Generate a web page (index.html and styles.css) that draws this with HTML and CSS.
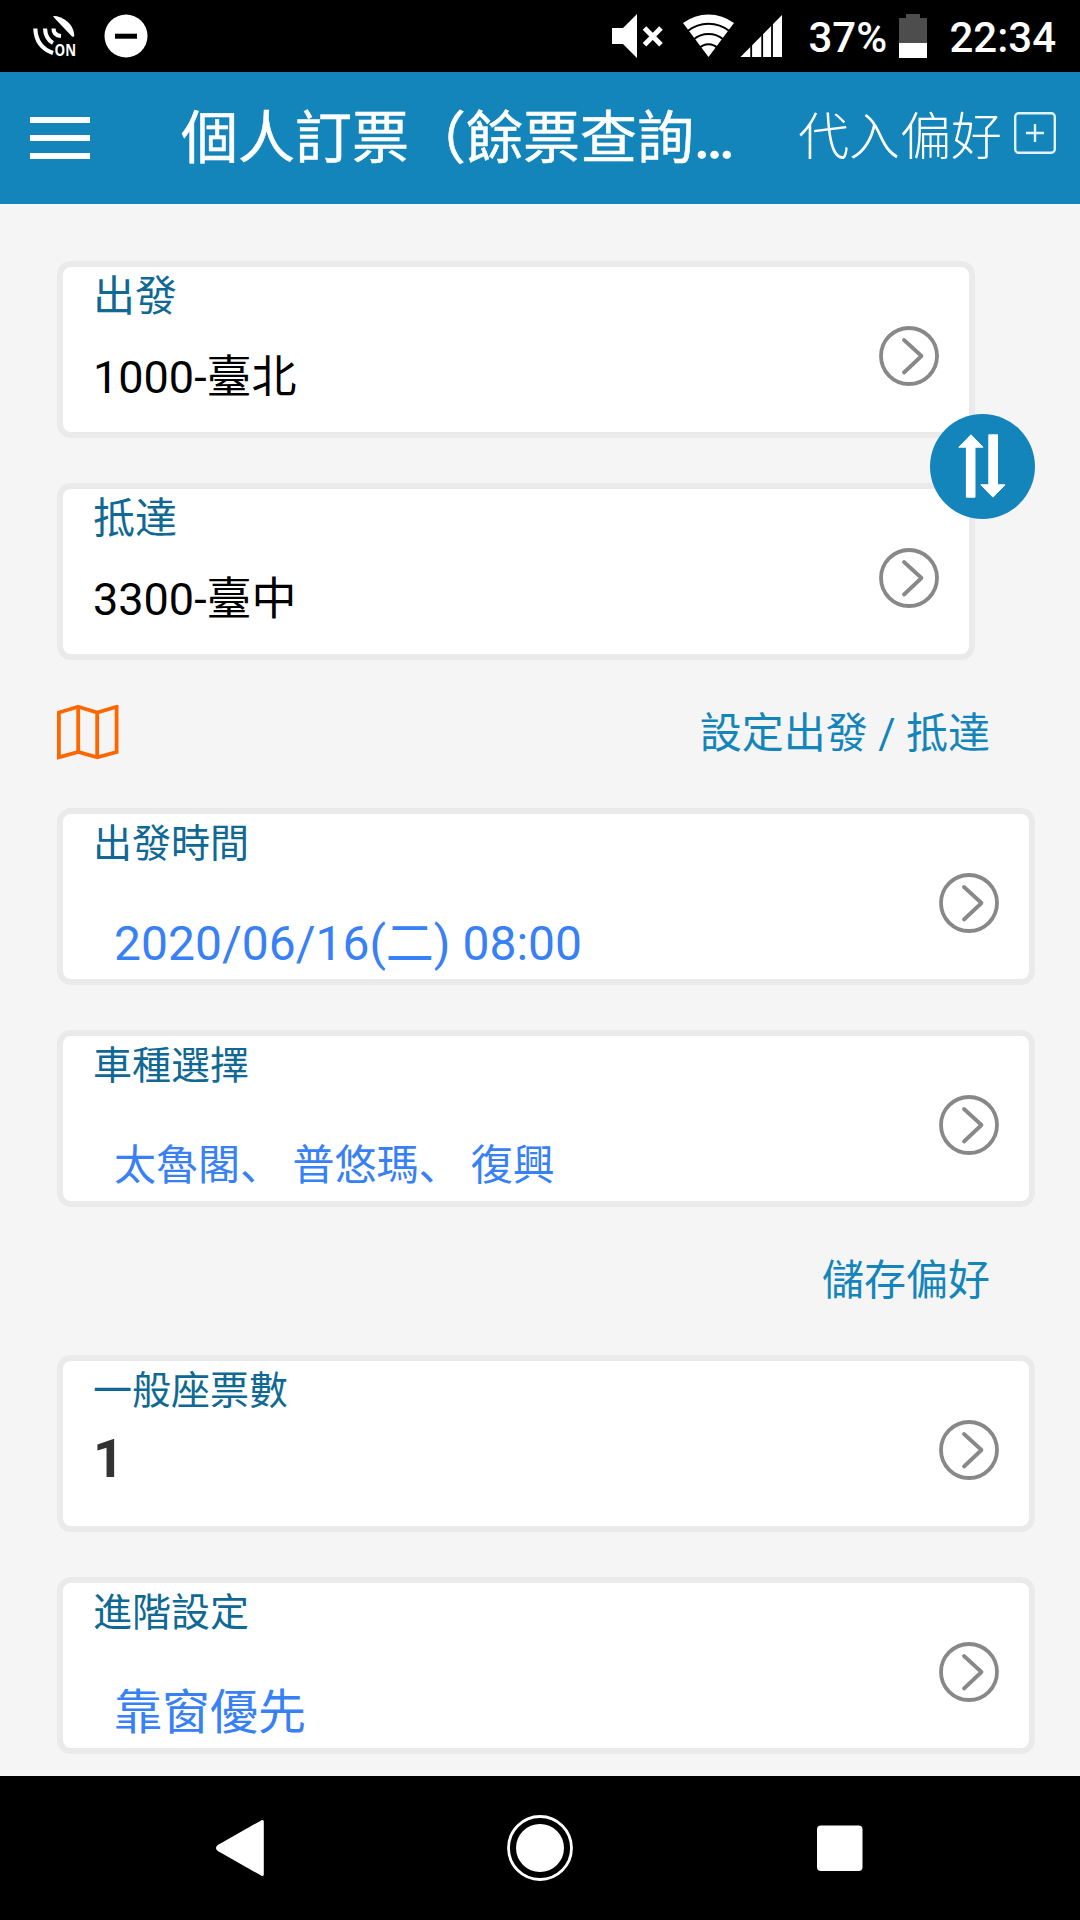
FILE: index.html
```html
<!DOCTYPE html>
<html lang="zh-Hans">
<head>
  <meta charset="UTF-8">
  <meta name="viewport" content="width=device-width, initial-scale=1.0">
  <title>個人訂票</title>
  <link rel="stylesheet" href="styles.css">
</head>
<body>

  <!-- Shared icons -->
  <svg class="icon-defs" width="0" height="0">
    <symbol id="chevron" viewBox="0 0 60 60">
      <circle cx="30" cy="30" r="28" fill="none" stroke="#888" stroke-width="3.8"/>
      <path d="M25 14 L42.5 30 L25 46.5" fill="none" stroke="#888" stroke-width="3.8" stroke-linecap="round" stroke-linejoin="round"/>
    </symbol>
  </svg>

  <!-- Status Bar -->
  <div class="status-bar">
    <div class="status-left">
      <svg width="46" height="48" viewBox="33 12 46 48">
        <path d="M53 16.5 Q54 15.5 57 16.3 Q73 21 74.3 35.5 Q74 37.5 72 36.5 Z" fill="#fff"/>
        <g fill="none" stroke="#fff" stroke-width="4.2">
          <path d="M35.3 28.5 Q36 47 53 53"/>
          <path d="M45 28.5 Q45.5 39 53 43"/>
          <path d="M53.5 28.5 Q53.5 35.5 61 36"/>
        </g>
        <text class="gps-text" x="54.5" y="56" textLength="21.5" lengthAdjust="spacingAndGlyphs">ON</text>
      </svg>
      <svg width="44" height="44" viewBox="0 0 44 44">
        <circle cx="22" cy="22" r="21.5" fill="#fff"/>
        <rect x="11" y="19.7" width="22" height="5" fill="#000"/>
      </svg>
    </div>
    <div class="status-right">
      <svg width="174" height="44" viewBox="612 14 174 44">
        <!-- muted speaker -->
        <path d="M612 28 H623 L637 14 V58 L623 44 H612 Z" fill="#fff"/>
        <path d="M644.5 28 L661 44.8 M661 28 L644.5 44.8" stroke="#fff" stroke-width="5"/>
        <!-- wifi -->
        <path d="M708.5 57 L683 23 A42.5 42.5 0 0 1 734 23 Z" fill="#fff"/>
        <g fill="none" stroke="#000" stroke-width="2">
          <path d="M687.7 31 A33.2 33.2 0 0 1 729.3 31"/>
          <path d="M693.5 39.5 A23 23 0 0 1 723.5 39.5"/>
          <path d="M699 48.5 A12.7 12.7 0 0 1 718 48.5"/>
        </g>
        <!-- signal -->
        <path d="M740.5 57 L782 15 V57 Z" fill="#fff"/>
        <path d="M751.2 57 V15 M762.2 57 V15 M772 57 V15" stroke="#000" stroke-width="1.8"/>
      </svg>
      <span class="battery-level">37%</span>
      <svg width="28" height="44" viewBox="0 0 28 44">
        <path d="M7 0 H21 V4 H28 V29 H0 V4 H7 Z" fill="#4d4d4d"/>
        <rect y="29" width="28" height="15" fill="#fff"/>
      </svg>
      <span class="clock">22:34</span>
    </div>
  </div>

  <!-- Header -->
  <header class="header">
    <div class="menu-icon">
      <span></span>
      <span></span>
      <span></span>
    </div>
    <h1>個人訂票（餘票查詢<span class="dots">…</span></h1>
    <div class="header-action">
      <span>代入偏好</span>
      <svg width="42" height="42" viewBox="0 0 42 42" fill="none" stroke="#e3f1f9" stroke-width="2.4">
        <rect x="1.2" y="1.2" width="39.6" height="39.6" rx="3.5"/>
        <path d="M12 21 H30 M21 12 V30"/>
      </svg>
    </div>
  </header>

  <main class="content">
    <!-- Stations -->
    <div class="stations">
      <div class="card station">
        <div class="card-text">
          <div class="label">出發</div>
          <div class="value">1000-臺北</div>
        </div>
        <svg class="chevron"><use href="#chevron"/></svg>
      </div>
      <div class="card station">
        <div class="card-text">
          <div class="label">抵達</div>
          <div class="value">3300-臺中</div>
        </div>
        <svg class="chevron"><use href="#chevron"/></svg>
      </div>
      <div class="swap-button">
        <svg width="48" height="64" viewBox="0 0 48 64" fill="#fff" stroke="#fff" stroke-width="1" stroke-linejoin="round">
          <path d="M13 0.8 L25 13.2 H17 V63.2 H8.4 V13.2 H0.8 Z"/>
          <path d="M35 63.2 L47 50.8 H39.5 V0.8 H30.8 V50.8 H22.8 Z"/>
        </svg>
      </div>
    </div>

    <div class="link-row">
      <svg class="map-icon" width="62" height="55" viewBox="57 705 62 55" fill="none" stroke="#ff6600" stroke-width="3.8">
        <path d="M58.9 712.5 L78.2 706.8 L97.2 712.5 L116.6 706.8 V752 L97.2 757.3 L78.2 752 L58.9 757.3 Z"/>
        <path d="M78.2 706.8 V752 M97.2 712.5 V757.3"/>
      </svg>
      <span class="link">設定出發 / 抵達</span>
    </div>

    <div class="card">
      <div class="card-text">
        <div class="label">出發時間</div>
        <div class="value picked">2020/06/16(二) 08:00</div>
      </div>
      <svg class="chevron"><use href="#chevron"/></svg>
    </div>
    <div class="card">
      <div class="card-text">
        <div class="label">車種選擇</div>
        <div class="value picked trains">太魯閣、 普悠瑪、 復興</div>
      </div>
      <svg class="chevron"><use href="#chevron"/></svg>
    </div>

    <div class="link-row save-row">
      <span class="link">儲存偏好</span>
    </div>

    <div class="card">
      <div class="card-text">
        <div class="label">一般座票數</div>
        <div class="value count">1</div>
      </div>
      <svg class="chevron"><use href="#chevron"/></svg>
    </div>
    <div class="card">
      <div class="card-text">
        <div class="label">進階設定</div>
        <div class="value picked">靠窗優先</div>
      </div>
      <svg class="chevron"><use href="#chevron"/></svg>
    </div>
  </main>

  <!-- Navigation Bar -->
  <div class="nav-bar">
    <svg width="66" height="66" viewBox="0 0 66 66">
      <path d="M55.3 6.5 V59.5 L12 35 Q9 33 12 31 Z" fill="#fff" stroke="#fff" stroke-width="3" stroke-linejoin="round"/>
    </svg>
    <svg width="66" height="66" viewBox="0 0 66 66">
      <circle cx="33" cy="33" r="31.5" fill="none" stroke="#fff" stroke-width="2.8"/>
      <circle cx="33" cy="33" r="24" fill="#fff"/>
    </svg>
    <svg width="66" height="66" viewBox="0 0 66 66">
      <rect x="10" y="10.5" width="45.5" height="45.5" rx="4" fill="#fff"/>
    </svg>
  </div>

</body>
</html>
```
FILE: styles.css
```css
* {
  box-sizing: border-box;
}

body {
  margin: 0;
  height: 1920px;
  display: flex;
  flex-direction: column;
  font-family: Roboto, "Noto Sans CJK SC", sans-serif;
  background-color: #f5f5f5;
  overflow: hidden;
}

svg {
  display: block;
  flex-shrink: 0;
}

.icon-defs {
  position: absolute;
}

/* Status Bar */
.status-bar {
  height: 72px;
  padding: 0 24px 0 33px;
  display: flex;
  justify-content: space-between;
  align-items: center;
  background-color: #000;
  color: #fff;
  font-size: 42px;
  font-weight: 500;
}

.status-left, .status-right {
  display: flex;
  align-items: center;
}

.status-left {
  gap: 25px;
}

.gps-text {
  font-family: "Open Sans", sans-serif;
  font-size: 16px;
  font-weight: 700;
  fill: #fff;
}

.battery-level, .clock {
  line-height: 60px;
  padding-top: 4px;
}

.battery-level {
  width: 79px;
  margin: 0 12px 0 22px;
}

.clock {
  margin-left: 22px;
}

/* Header */
.header {
  height: 132px;
  padding: 0 24px 0 30px;
  display: flex;
  align-items: center;
  background-color: #1485bb;
  color: #fff;
}

.menu-icon {
  width: 60px;
  display: flex;
  flex-direction: column;
  gap: 12px;
}

.menu-icon span {
  height: 6px;
  background-color: #fff;
}

.header h1 {
  margin: 0 0 0 91px;
  padding-top: 2px;
  font-size: 57px;
  font-weight: 400;
  line-height: 84px;
  white-space: nowrap;
  -webkit-text-stroke: 0.5px #fff;
}

.header .dots {
  font-weight: 500;
}

.header-action {
  margin-left: auto;
  display: flex;
  align-items: center;
  gap: 12px;
  font-size: 51px;
  font-weight: 300;
  line-height: 72px;
}

.header-action svg {
  margin-bottom: 10px;
}

/* Content */
.content {
  flex: 1;
  padding: 57px 45px 0 57px;
}

.card {
  height: 177px;
  padding: 0 30px;
  display: flex;
  justify-content: space-between;
  background-color: #fff;
  border: 6px solid #eaeaea;
  border-radius: 14px;
}

.card + .card {
  margin-top: 45px;
}

.label {
  font-size: 39px;
  line-height: 61px;
  color: #0f6994;
}

.value {
  font-size: 45px;
  line-height: 66px;
  color: #000;
  white-space: nowrap;
}

.picked {
  margin: 33px 0 0 21px;
  font-size: 48px;
  line-height: 72px;
  color: #3880f6;
}

.trains {
  font-size: 42px;
}

.count {
  margin-top: 4px;
  font-size: 54px;
  font-weight: 700;
  color: #333;
}

.chevron {
  width: 60px;
  height: 60px;
  margin-top: 59px;
}

/* Stations */
.stations {
  position: relative;
}

.station {
  margin-right: 60px;
}

.station .label {
  font-size: 42px;
  line-height: 59px;
}

.station .value {
  margin-top: 19px;
}

/* Swap button sits over both station cards */
.swap-button {
  position: absolute;
  top: 153px;
  right: 0;
  width: 105px;
  height: 105px;
  padding: 0 1px 1px 0;
  display: flex;
  justify-content: center;
  align-items: center;
  border-radius: 50%;
  background-color: #1485bb;
}

.link-row {
  height: 148px;
  padding-right: 45px;
  display: flex;
  justify-content: space-between;
  align-items: center;
}

.map-icon {
  margin-bottom: 4px;
}

.save-row {
  justify-content: flex-end;
}

.link {
  font-size: 42px;
  line-height: 60px;
  color: #1485bb;
}

/* Navigation Bar */
.nav-bar {
  height: 144px;
  padding: 0 207px;
  display: flex;
  justify-content: space-between;
  align-items: center;
  background-color: #000;
}
```
